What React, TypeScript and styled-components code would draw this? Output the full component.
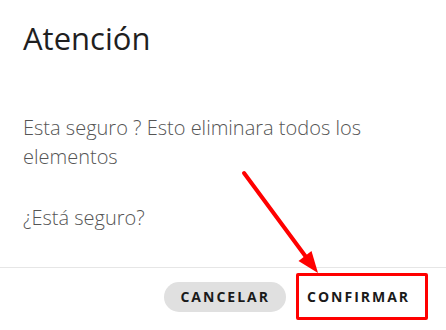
import styled, { createGlobalStyle } from "styled-components";

const GlobalStyle = createGlobalStyle`
  html, body {
    margin: 0;
    padding: 0;
    background: #ffffff;
  }

  body {
    font-family: "Open Sans", "Noto Sans", sans-serif;
  }
`;

export default function App() {
  return (
    <>
      <GlobalStyle />
      <StyledPage>
        <StyledDialog>
          <StyledTitle>Atención</StyledTitle>
          <StyledContent>
            <p>Esta seguro ? Esto eliminara todos los elementos</p>
            <p>¿Está seguro?</p>
          </StyledContent>
          <StyledDivider />
          <StyledActions>
            <StyledButton $variant="filled">Cancelar</StyledButton>
            <StyledHighlight>
              <StyledButton $variant="text">Confirmar</StyledButton>
            </StyledHighlight>
          </StyledActions>
        </StyledDialog>
        <StyledArrow viewBox="0 0 446 330" width="446" height="330">
          <line
            x1="244"
            y1="173"
            x2="309"
            y2="261"
            stroke="#ff0000"
            strokeWidth="4"
            strokeLinecap="round"
          />
          <polygon points="318,273 298.5,261 311.5,251" fill="#ff0000" />
        </StyledArrow>
      </StyledPage>
    </>
  );
}

const StyledPage = styled.div`
  position: relative;
  width: 446px;
  height: 330px;
  overflow: hidden;
  background: #ffffff;
`;

const StyledDialog = styled.div`
  display: flex;
  flex-direction: column;
  height: 100%;
`;

const StyledTitle = styled.h2`
  margin: 0;
  padding: 17px 23px 0;
  font-size: 31px;
  font-weight: 400;
  line-height: 43px;
  color: #1f1f1f;
`;

const StyledContent = styled.div`
  padding: 53px 23px 35px;
  display: flex;
  flex-direction: column;
  gap: 32px;

  & > p {
    margin: 0;
    font-size: 20px;
    font-weight: 300;
    line-height: 29px;
    color: #555555;
  }
`;

const StyledDivider = styled.hr`
  margin: 0;
  border: none;
  border-top: 1px solid #e6e6e6;
`;

const StyledActions = styled.div`
  display: flex;
  justify-content: flex-end;
  align-items: center;
  gap: 10px;
  padding: 5px 18px 10px;
`;

const StyledHighlight = styled.div`
  display: flex;
  align-items: center;
  justify-content: flex-start;
  width: 132px;
  height: 47px;
  box-sizing: border-box;
  border: 3px solid #ff0000;
  border-radius: 2px;
`;

const StyledButton = styled.button<{ $variant: "filled" | "text" }>`
  height: 30px;
  padding: 0 ${({ $variant }) => ($variant === "filled" ? "16px" : "8px")};
  border: none;
  border-radius: 15px;
  background: ${({ $variant }) => ($variant === "filled" ? "#e0e0e0" : "transparent")};
  color: #1a1a1a;
  font-family: "Open Sans", "Noto Sans", sans-serif;
  font-size: 14px;
  font-weight: 700;
  letter-spacing: 2px;
  text-transform: uppercase;
  cursor: pointer;
`;

const StyledArrow = styled.svg`
  position: absolute;
  top: 0;
  left: 0;
  pointer-events: none;
`;
